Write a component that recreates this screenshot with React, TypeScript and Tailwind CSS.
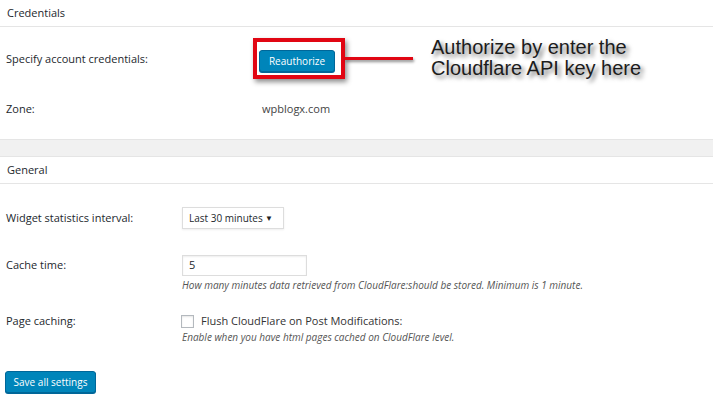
import React from 'react';

function SectionHeader({ title }: { title: string }) {
    return (
        <div className="h-[27px] px-[7px] flex items-center border-b border-[#e5e5e5] text-[11px] text-[#23282d]">
            {title}
        </div>
    );
}

export default function App() {
    return (
        <div className="w-[713px] h-[405px] overflow-hidden bg-white font-['Open_Sans',sans-serif] text-[#23282d]">
            {/* Credentials */}
            <SectionHeader title="Credentials" />
            <div className="h-[112px] pl-[6px] pt-[12px]">
                <div className="flex items-center h-[38px]">
                    <div className="w-[247px] pt-[3px] text-[11px]">Specify account credentials:</div>
                    <div className="border-[4px] border-[#e10613] pl-[2px] pr-[6px] pt-[5px] pb-[3px] shadow-[2px_3px_5px_rgba(0,0,0,0.45)]">
                        <button className="w-[76px] h-[22px] rounded-[3px] bg-[#0085ba] border border-[#006799] text-white text-[10px] leading-none shadow-[0_1px_0_#006799]">
                            Reauthorize
                        </button>
                    </div>
                    <div className="w-[68px] h-[3px] bg-[#e10613] shadow-[1px_2px_3px_rgba(0,0,0,0.45)]" />
                    <div className="ml-[18px] font-['Liberation_Sans',Arial,sans-serif] text-[20px] leading-[21px] text-[#1c1c1c] [text-shadow:3px_3px_4px_rgba(0,0,0,0.55)]">
                        <div>Authorize by enter the</div>
                        <div>Cloudflare API key here</div>
                    </div>
                </div>
                <div className="flex items-center h-[20px] mt-[22px]">
                    <div className="w-[256px] text-[11px]">Zone:</div>
                    <div className="text-[11px] text-[#444]">wpblogx.com</div>
                </div>
            </div>

            {/* spacer band */}
            <div className="h-[18px] bg-[#f1f1f1] border-y border-[#e5e5e5]" />

            {/* General */}
            <SectionHeader title="General" />
            <div className="pl-[6px] pt-[23px]">
                <div className="flex items-center h-[22px]">
                    <div className="w-[176px] text-[11px]">Widget statistics interval:</div>
                    <div className="w-[102px] h-[22px] border border-[#ddd] flex items-center justify-between pl-[6px] pr-[10px] text-[10px] whitespace-nowrap shadow-[0_1px_2px_rgba(0,0,0,0.07)]">
                        <span>Last 30 minutes</span>
                        <span className="text-[8px] text-[#222]">▼</span>
                    </div>
                </div>

                <div className="flex items-center h-[21px] mt-[26px]">
                    <div className="w-[176px] text-[11px]">Cache time:</div>
                    <div className="w-[125px] h-[21px] border border-[#ddd] flex items-center pl-[6px] text-[11px] shadow-[inset_0_1px_2px_rgba(0,0,0,0.07)]">
                        5
                    </div>
                </div>
                <div className="ml-[176px] mt-[3px] h-[12px] leading-[12px] text-[10px] italic text-[#555] whitespace-nowrap">
                    How many minutes data retrieved from CloudFlare:should be stored. Minimum is 1 minute.
                </div>

                <div className="flex items-center h-[14px] mt-[23px]">
                    <div className="w-[175px] text-[11px]">Page caching:</div>
                    <div className="w-[13px] h-[13px] border border-[#b4b9be] bg-white shadow-[inset_0_1px_2px_rgba(0,0,0,0.1)]" />
                    <div className="ml-[7px] text-[11px] text-[#333]">Flush CloudFlare on Post Modifications:</div>
                </div>
                <div className="ml-[176px] mt-[3px] h-[12px] leading-[12px] text-[10px] italic text-[#555] whitespace-nowrap">
                    Enable when you have html pages cached on CloudFlare level.
                </div>

                <button className="mt-[28px] -ml-[1px] w-[91px] h-[22px] rounded-[3px] bg-[#0085ba] border border-[#006799] text-white text-[10px] leading-none shadow-[0_1px_0_#006799]">
                    Save all settings
                </button>
            </div>
        </div>
    );
}
